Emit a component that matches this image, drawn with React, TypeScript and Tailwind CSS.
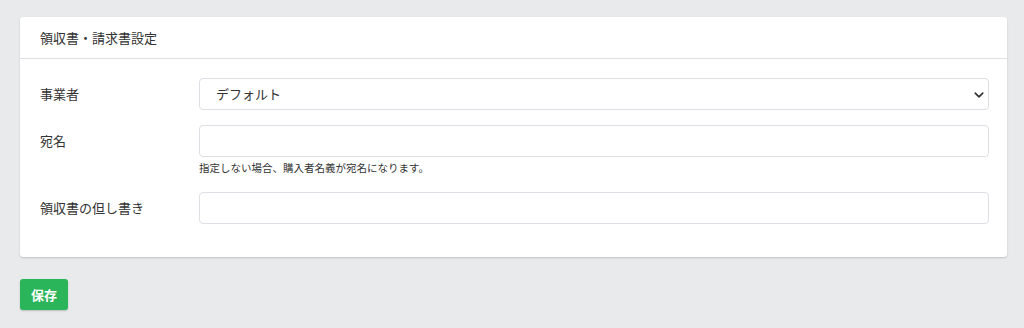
import React from "react";

export default function App() {
  const font = { fontFamily: '"Noto Sans CJK JP", "Noto Sans", sans-serif' };
  return (
    <div className="w-[1024px] h-[328px] bg-[#e9eaec] pt-[17px] px-5 text-[#333]" style={font}>
      <div className="w-[987px] bg-white rounded-[3px] shadow-[0_1px_2px_rgba(0,0,0,0.18)]">
        <div className="h-[42px] flex items-center px-5 border-b border-[#dee0e3] text-[13px]">
          領収書・請求書設定
        </div>
        <div className="pl-5 pr-[18px] pt-[19px] pb-[33px] flex flex-col">
          <div className="flex items-center">
            <div className="w-[159px] shrink-0 text-[13px]">事業者</div>
            <div className="relative flex-1 h-[32px] border border-[#dcdfe3] rounded-[4px] flex items-center px-4 text-[13px]">
              デフォルト
              <svg className="absolute right-[4px] top-[11px]" width="10" height="10" viewBox="0 0 16 16">
                <path d="M2 5l6 6 6-6" fill="none" stroke="#333" strokeWidth="2.6" strokeLinecap="round" strokeLinejoin="round" />
              </svg>
            </div>
          </div>
          <div className="flex items-start mt-[15px]">
            <div className="w-[159px] shrink-0 text-[13px] leading-[32px]">宛名</div>
            <div className="flex-1 flex flex-col">
              <div className="h-[32px] border border-[#dcdfe3] rounded-[4px]" />
              <div className="text-[10.5px] mt-[4px] leading-[14px]">指定しない場合、購入者名義が宛名になります。</div>
            </div>
          </div>
          <div className="flex items-center mt-[17px]">
            <div className="w-[159px] shrink-0 text-[13px]">領収書の但し書き</div>
            <div className="flex-1 h-[32px] border border-[#dcdfe3] rounded-[4px]" />
          </div>
        </div>
      </div>
      <button className="mt-[22px] w-[48px] h-[31px] bg-[#2bb55a] text-white text-[13px] font-bold rounded-[3px] shadow-[0_1px_2px_rgba(0,0,0,0.2)]" style={font}>
        保存
      </button>
    </div>
  );
}
